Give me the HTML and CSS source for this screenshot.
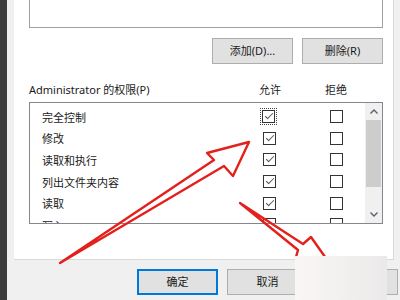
FILE: index.html
```html
<!DOCTYPE html>
<html lang="zh">
<head>
<meta charset="utf-8">
<title>权限</title>
<link rel="stylesheet" href="styles.css">
</head>
<body>
<div class="screen">
  <div class="edge"></div>
  <div class="dialog">
    <div class="panel">
      <div class="userbox"></div>
      <div class="btnrow">
        <button class="btn">添加(D)...</button>
        <button class="btn">删除(R)</button>
      </div>
      <div class="permhead">
        <span class="permlabel">Administrator 的权限(P)</span>
        <span class="colh">允许</span>
        <span></span>
        <span class="colh">拒绝</span>
      </div>
      <div class="permbox">
        <div class="rows">
          <div class="row"><span class="name">完全控制</span><span class="cell"><span class="focus"><span class="cb on"></span></span></span><span class="cell"><span class="cb"></span></span></div>
          <div class="row"><span class="name">修改</span><span class="cell"><span class="cb on"></span></span><span class="cell"><span class="cb"></span></span></div>
          <div class="row"><span class="name">读取和执行</span><span class="cell"><span class="cb on"></span></span><span class="cell"><span class="cb"></span></span></div>
          <div class="row"><span class="name">列出文件夹内容</span><span class="cell"><span class="cb on"></span></span><span class="cell"><span class="cb"></span></span></div>
          <div class="row"><span class="name">读取</span><span class="cell"><span class="cb on"></span></span><span class="cell"><span class="cb"></span></span></div>
          <div class="row"><span class="name">写入</span><span class="cell"><span class="cb"></span></span><span class="cell"><span class="cb"></span></span></div>
        </div>
        <div class="scrollbar">
          <div class="sbtn"><svg width="8" height="5" viewBox="0 0 8 5"><polyline points="0.5,4.5 4,1 7.5,4.5" fill="none" stroke="#606060" stroke-width="1.4"/></svg></div>
          <div class="track"><div class="thumb"></div></div>
          <div class="sbtn"><svg width="8" height="5" viewBox="0 0 8 5"><polyline points="0.5,0.5 4,4 7.5,0.5" fill="none" stroke="#606060" stroke-width="1.4"/></svg></div>
        </div>
      </div>
    </div>
    <div class="footer">
      <button class="btn wide default">确定</button>
      <button class="btn wide">取消</button>
      <button class="btn wide">应用(A)</button>
    </div>
  </div>
  <svg class="arrows" width="400" height="300" viewBox="0 0 400 300">
    <path d="M60,263 L214,160 L207,153 L249,142 L233,176 L224,166 Z" fill="none" stroke="#e3201b" stroke-width="2.4" stroke-linejoin="round"/>
    <path d="M240,203 L303,244 L311,237 L330,264 L296,257 L298,250 Z" fill="none" stroke="#e3201b" stroke-width="2.4" stroke-linejoin="round"/>
  </svg>
  <div class="watermark"></div>
</div>
</body>
</html>
```
FILE: styles.css
```css
* { box-sizing: border-box; }
html, body { margin: 0; padding: 0; }
body {
  font-family: "Noto Sans", "Noto Sans CJK SC", sans-serif;
  font-size: 11px;
  color: #1a1a1a;
  background: #f0f0f0;
}
.screen {
  position: relative;
  width: 400px;
  height: 300px;
  overflow: hidden;
  display: flex;
  background: #f0f0f0;
}
.edge { width: 7px; background: #3c3c3c; flex: none; }
.dialog {
  flex: 1;
  display: flex;
  flex-direction: column;
  padding-left: 7px;
  padding-right: 6px;
  min-width: 0;
}
.panel {
  height: 260px;
  background: #fff;
  border-right: 1px solid #d9d9d9;
  border-bottom: 1px solid #d9d9d9;
  padding-left: 15px;
  padding-right: 10px;
  flex: none;
}
.userbox {
  height: 28px;
  border: 1px solid #a0a0a0;
  border-top: none;
}
.btnrow {
  margin-top: 10px;
  display: flex;
  justify-content: flex-end;
  gap: 9px;
}
.btn {
  font: inherit;
  color: #1a1a1a;
  width: 81px;
  height: 26px;
  background: #e1e1e1;
  border: 1px solid #adadad;
  padding: 0;
  line-height: 24px;
}
.permhead {
  margin-top: 19px;
  height: 14px;
  line-height: 14px;
  display: grid;
  grid-template-columns: 228px 26px 40px 26px;
  margin-bottom: 5px;
}
.colh { text-align: center; }
.permbox {
  height: 122px;
  border: 1px solid #828790;
  display: flex;
}
.rows {
  flex: 1;
  padding-top: 3px;
  overflow: hidden;
}
.row {
  height: 21.6px;
  display: grid;
  grid-template-columns: 233px 67px 1fr;
  align-items: center;
}
.name { padding-left: 12px; }
.cell { display: flex; align-items: center; }
.cb {
  display: block;
  width: 13px;
  height: 13px;
  border: 1px solid #333;
  background: #fff;
  position: relative;
}
.cb.on::after {
  content: "";
  position: absolute;
  left: 3px;
  top: 1px;
  width: 3px;
  height: 7px;
  border-right: 1.5px solid #555;
  border-bottom: 1.5px solid #555;
  transform: rotate(45deg);
  transform-origin: center;
}
.cb.on::after { left: 4px; top: 0px; width: 3px; height: 7px; }
.focus {
  display: block;
  margin-left: -1px;
  padding: 1px;
  outline: 1px dotted #444;
  outline-offset: 0;
}
.row:first-child .cell:nth-child(2) { margin-left: -1px; }
.scrollbar {
  width: 17px;
  background: #f0f0f0;
  display: flex;
  flex-direction: column;
}
.sbtn {
  height: 17px;
  display: flex;
  align-items: center;
  justify-content: center;
  flex: none;
}
.track { flex: 1; padding: 0 1px; }
.thumb { height: 67px; background: #cdcdcd; }
.footer {
  height: 40px;
  padding-top: 9px;
  padding-left: 123px;
  display: flex;
  gap: 9px;
  flex: none;
}
.btn.wide { flex: none; }
.btn.default {
  border: 1px solid #0078d7;
  box-shadow: inset 0 0 0 1px #0078d7;
}
.arrows {
  position: absolute;
  left: 0;
  top: 0;
  pointer-events: none;
}
.watermark {
  position: absolute;
  left: 295px;
  top: 256px;
  width: 92px;
  height: 44px;
  background: linear-gradient(90deg, #faf6f6, #ebe9e9);
}
```
